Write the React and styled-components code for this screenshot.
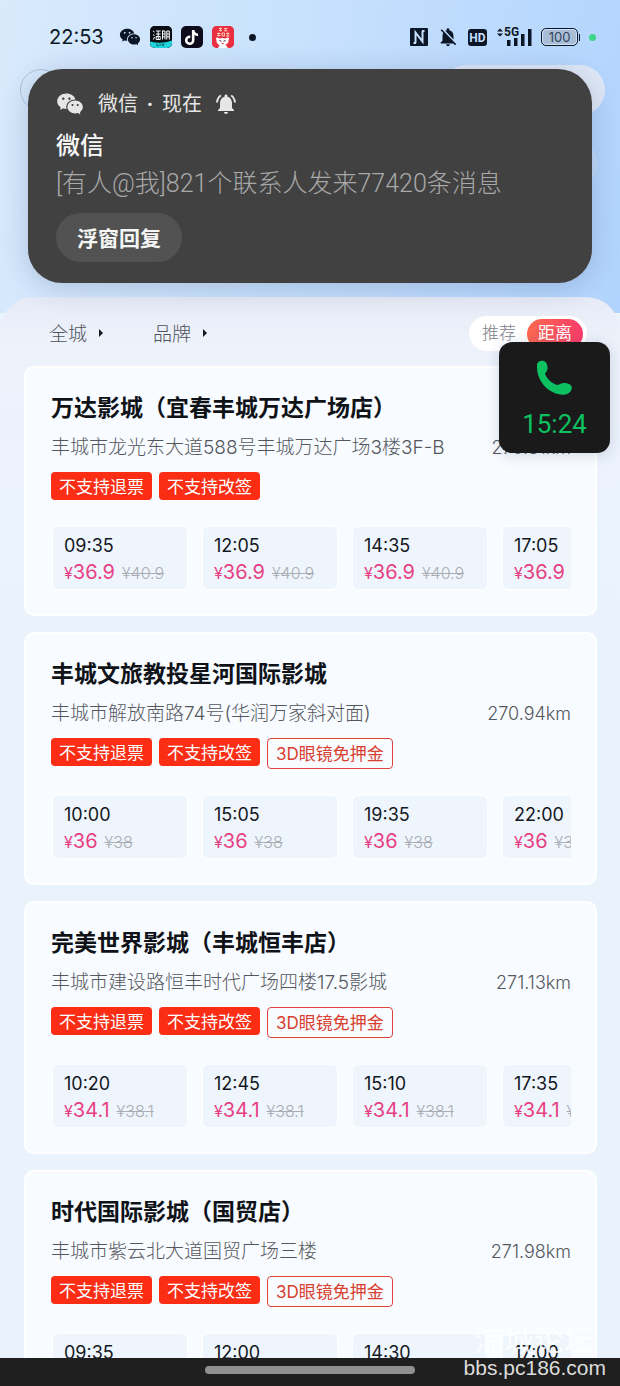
import React from "react";
import styled, { createGlobalStyle } from "styled-components";
import { RiWechatFill } from "react-icons/ri";
import { FaTiktok } from "react-icons/fa6";
import { MdNotificationsActive, MdNotificationsOff } from "react-icons/md";

const GlobalStyle = createGlobalStyle`
  * {
    box-sizing: border-box;
  }
  body {
    margin: 0;
    font-family: Inter, "Noto Sans CJK SC", sans-serif;
    color: #14181f;
  }
  button {
    font: inherit;
    color: inherit;
    border: 0;
    padding: 0;
    background: none;
    cursor: pointer;
  }
  h2, p {
    margin: 0;
  }
`;

const Phone = styled.div`
  position: relative;
  display: flex;
  flex-direction: column;
  height: 100vh;
  overflow: hidden;
  background-color: #ebf3fc;
`;

const Screen = styled.div`
  flex: 1;
  min-height: 0;
  overflow: hidden;
`;

const Header = styled.header`
  height: 313px;
  background-image: linear-gradient(100deg, #d9eafc 0%, #c8e1fd 45%, #b1d4fe 100%);
`;

const StatusBar = styled.div`
  display: flex;
  align-items: center;
  justify-content: space-between;
  height: 65px;
  padding: 9px 24px 0 49px;
  color: #0b1726;
`;

const StatusGroup = styled.div`
  display: flex;
  align-items: center;
  gap: 9px;
`;

const Clock = styled.span`
  margin-right: 6px;
  font-size: 20px;
`;

const AppBadge = styled.span`
  display: flex;
  width: 22px;
  height: 22px;
  align-items: center;
  justify-content: center;
  overflow: hidden;
  border-radius: 5px;
  color: #ffffff;
  background-color: ${(props) => props.$color};
`;

const Dot = styled.span`
  width: 7px;
  height: 7px;
  border-radius: 50%;
  background-color: ${(props) => props.$color};
`;

const MoreDot = styled(Dot)`
  margin-left: 6px;
`;

const Battery = styled.span`
  display: flex;
  align-items: center;
  gap: 1px;
  &::after {
    content: "";
    width: 1px;
    height: 7px;
    background-color: #0b1726;
  }
`;

const BatteryBody = styled.span`
  width: 37px;
  height: 18px;
  border: 1px solid #0b1726;
  border-radius: 5px;
  box-shadow: inset 0 0 0 1px #cfe3fb;
  background-color: #a9bdd6;
  font-size: 13px;
  line-height: 16px;
  text-align: center;
  color: #33465c;
`;

const TopBar = styled.div`
  display: flex;
  align-items: center;
  justify-content: space-between;
  height: 50px;
  padding: 0 15px 0 20px;
`;

const BackButton = styled.button`
  width: 42px;
  height: 42px;
  border: 1px solid #aec3db;
  border-radius: 50%;
`;

const Capsule = styled.div`
  width: 164px;
  height: 50px;
  border-radius: 25px;
  background-color: #dfe8f6;
`;

const SearchRow = styled.div`
  display: flex;
  padding: 24px 23px 0 80px;
`;

const SearchInput = styled.input`
  flex: 1;
  min-width: 0;
  height: 48px;
  border: 1px solid #c9def5;
  border-radius: 24px;
  background-color: #bfdafa;
`;

const Notification = styled.section`
  position: absolute;
  top: 69px;
  left: 28px;
  right: 28px;
  z-index: 2;
  padding: 21px 28px;
  border-radius: 34px;
  background-color: #414141;
  box-shadow: 0 4px 28px rgba(40, 60, 100, 0.22);
  font-family: Roboto, "Noto Sans CJK SC", sans-serif;
`;

const NotificationHead = styled.div`
  display: flex;
  align-items: center;
  height: 28px;
  font-size: 20px;
  line-height: 28px;
  color: #e6e6e6;
`;

const NotificationApp = styled.span`
  display: flex;
  align-items: center;
  margin: 0 12px 0 14px;
`;

const Separator = styled.span`
  width: 24px;
  text-align: center;
  font-weight: 900;
`;

const NotificationTitle = styled.h2`
  margin-top: 10px;
  font-size: 24px;
  font-weight: 500;
  line-height: 36px;
  color: #fafafa;
`;

const NotificationText = styled.p`
  margin-top: 1px;
  font-size: 25px;
  font-weight: 300;
  line-height: 38px;
  color: #a8a8a8;
  white-space: nowrap;
`;

const ReplyButton = styled.button`
  height: 49px;
  margin-top: 10px;
  padding: 0 21px 2px;
  border-radius: 25px;
  background-color: #525252;
  font-size: 21px;
  font-weight: 700;
  color: #f5f5f5;
`;

const Sheet = styled.main`
  position: relative;
  margin-top: -16px;
  padding: 19px 23px 0 24px;
  border-radius: 34px 34px 0 0;
  background-image: linear-gradient(#e6ebf6 0, #edf2fb 50px, #eaf3fc 320px);
`;

const FilterRow = styled.div`
  display: flex;
  align-items: center;
  height: 35px;
  margin-bottom: 15px;
  padding: 0 10px 0 25px;
`;

const FilterButton = styled.button`
  display: flex;
  align-items: center;
  gap: 12px;
  margin-right: 50px;
  padding-bottom: 2px;
  font-size: 19px;
  font-weight: 300;
  color: #4f535a;
  &::after {
    content: "";
    border-left: 4px solid #14181f;
    border-top: 4px solid transparent;
    border-bottom: 4px solid transparent;
  }
`;

const Segmented = styled.div`
  display: flex;
  align-items: center;
  height: 35px;
  margin-left: auto;
  padding: 0 4px 0 2px;
  border-radius: 18px;
  background-color: #ffffff;
`;

const Segment = styled.button`
  width: 56px;
  height: 30px;
  padding-bottom: 2px;
  border-radius: 15px;
  font-size: 17px;
  font-weight: ${(props) => (props.$active ? 400 : 300)};
  line-height: 28px;
  color: ${(props) => (props.$active ? "#ffffff" : "#7d828b")};
  background-image: ${(props) =>
    props.$active ? "linear-gradient(100deg, #fb6a4e, #f83a6c)" : "none"};
`;

const CinemaList = styled.div`
  display: flex;
  flex-direction: column;
  gap: 16px;
`;

const Card = styled.article`
  padding: 24px 24px 23px 25px;
  border: 2px solid #ffffff;
  border-radius: 10px;
  background-color: #f8fbff;
`;

const CinemaName = styled.h2`
  font-size: 23px;
  font-weight: 700;
  line-height: 32px;
  white-space: nowrap;
  color: #0f1318;
`;

const AddressRow = styled.div`
  display: flex;
  justify-content: space-between;
  margin-top: 11px;
  font-size: 19px;
  font-weight: 300;
  line-height: 26px;
  white-space: nowrap;
  color: #54585e;
`;

const Distance = styled.span`
  font-size: 18px;
`;

const Tags = styled.div`
  display: flex;
  align-items: flex-start;
  gap: 7px;
  margin-top: 11px;
`;

const Tag = styled.span`
  height: 28px;
  padding: 1px 8px 0;
  border-radius: 4px;
  background-color: #fb2d14;
  font-size: 17px;
  line-height: 28px;
  color: #ffffff;
`;

const OutlineTag = styled(Tag)`
  height: 31px;
  border: 1px solid #e0443a;
  background-color: transparent;
  color: #d8402f;
`;

const Shows = styled.div`
  display: flex;
  gap: 12px;
  margin-top: 25px;
  overflow: hidden;
`;

const Show = styled.button`
  flex: 0 0 138px;
  height: 66px;
  padding: 6px 0 2px 11px;
  border: 2px solid #fcfdff;
  border-radius: 7px;
  background-color: #eff5fd;
  text-align: left;
  white-space: nowrap;
`;

const ShowTime = styled.div`
  font-size: 18px;
  line-height: 24px;
`;

const PriceLine = styled.div`
  display: flex;
  align-items: baseline;
  line-height: 28px;
`;

const Price = styled.span`
  font-size: 20px;
  color: #e83f83;
`;

const Yen = styled.span`
  font-size: 16px;
`;

const OldPrice = styled.s`
  margin-left: 7px;
  font-size: 16px;
  font-weight: 300;
  color: #a9adb3;
`;

const CallBubble = styled.button`
  position: absolute;
  top: 342px;
  right: 10px;
  z-index: 2;
  display: flex;
  flex-direction: column;
  align-items: center;
  width: 111px;
  height: 111px;
  padding-top: 18px;
  border-radius: 13px;
  background-color: #1a1a1a;
  box-shadow: 0 2px 14px rgba(40, 60, 100, 0.18);
  color: #0cc160;
`;

const CallTime = styled.span`
  margin-top: 12px;
  font-family: Roboto, sans-serif;
  font-size: 26px;
  line-height: 32px;
`;

const NavBar = styled.div`
  display: flex;
  justify-content: center;
  height: 28px;
  padding-top: 8px;
  background-color: #1f1f1f;
`;

const HomeIndicator = styled.div`
  width: 210px;
  height: 8px;
  border-radius: 4px;
  background-color: #909090;
`;

const Watermark = styled.div`
  position: absolute;
  right: 14px;
  bottom: 5px;
  z-index: 3;
  display: flex;
  flex-direction: column;
  align-items: flex-end;
  pointer-events: none;
`;

const WatermarkName = styled.span`
  margin-right: 12px;
  font-size: 30px;
  line-height: 30px;
  color: rgba(255, 255, 255, 0.85);
`;

const WatermarkSite = styled.span`
  font-family: "Liberation Sans", Arial, sans-serif;
  font-size: 21px;
  line-height: 26px;
  color: #dcdcdc;
`;

const REFUND_TAGS = ["不支持退票", "不支持改签"];

const cinemas = [
  {
    name: "万达影城（宜春丰城万达广场店）",
    address: "丰城市龙光东大道588号丰城万达广场3楼3F-B",
    distance: "270.81km",
    times: ["09:35", "12:05", "14:35", "17:05"],
    price: "36.9",
    oldPrice: "40.9",
  },
  {
    name: "丰城文旅教投星河国际影城",
    address: "丰城市解放南路74号(华润万家斜对面)",
    distance: "270.94km",
    perk: "3D眼镜免押金",
    times: ["10:00", "15:05", "19:35", "22:00"],
    price: "36",
    oldPrice: "38",
  },
  {
    name: "完美世界影城（丰城恒丰店）",
    address: "丰城市建设路恒丰时代广场四楼17.5影城",
    distance: "271.13km",
    perk: "3D眼镜免押金",
    times: ["10:20", "12:45", "15:10", "17:35"],
    price: "34.1",
    oldPrice: "38.1",
  },
  {
    name: "时代国际影城（国贸店）",
    address: "丰城市紫云北大道国贸广场三楼",
    distance: "271.98km",
    perk: "3D眼镜免押金",
    times: ["09:35", "12:00", "14:30", "17:00"],
    price: "34.9",
    oldPrice: "38.9",
  },
];

const LiveAppIcon = () => (
  <svg width="22" height="22" viewBox="0 0 22 22">
    <rect width="22" height="22" fill="#0a0d12" />
    <path d="M0 15.5q11 3 22-1V22H0z" fill="#1fd5dc" />
    <path
      d="M3 5l1.500 1M3 8.500l1.500 1M3.500 13.500l1-2.500M6 5h4.500M6 8h4.500M8.200 5v8M6.200 10.500h4v3h-4zM12.500 4.500v9M12.500 5h2.500v8.500M12.500 8h2.500M12.500 10.800h2.500M16.800 5h2.500v8.500M16.800 5v8.500M16.800 8h2.500M16.800 10.800h2.500"
      stroke="#fff"
      strokeWidth="1"
      fill="none"
    />
    <path d="M7 17.500v2.500h1.500M10 17.500v2.500M12 17.500l1 2.500 1-2.500" stroke="#0a5d66" fill="none" />
  </svg>
);

const MascotIcon = () => (
  <svg width="22" height="22" viewBox="0 0 22 22">
    <rect width="22" height="22" fill="#ea2f43" />
    <path
      d="M7 2.500h3M8.500 1.500v4M7 4.500h3M12 2.500h3.500M13.500 2v3M12 4.800h3.500M5 7.500h3.500M6.800 6.500v4M5 9.500h3.500M10 7h2.500v3H10zM14 7.500h3.500M15.800 6.500v4M14 10h3.500"
      stroke="#ffd9b8"
      strokeWidth="0.900"
      fill="none"
    />
    <path d="M4.500 14q-1.500-2.500 1-2.500l2 1q3-1 6 0l2-1q2.500 0 1 2.500.500 3.500-3 4.500l2.500 3.500H6l1.500-3Q4 17.500 4.500 14z" fill="#fff" />
    <path d="M7.500 14.500l2 .8M13.500 14.500l-2 .8" stroke="#40202a" />
    <path d="M9 17h3.500q-1.500 2-3.500 0z" fill="#d5233a" />
  </svg>
);

const NfcIcon = () => (
  <svg width="18" height="18" viewBox="0 0 18 18">
    <rect width="18" height="18" rx="1" fill="#0b1726" />
    <path d="M5.500 15V4.500l7 9V3M3.500 15h2.500M12 3h2.500" stroke="#c5dffd" strokeWidth="2" fill="none" />
  </svg>
);

const HdIcon = () => (
  <svg width="19" height="17" viewBox="0 0 19 17">
    <rect width="19" height="17" rx="3" fill="#0b1726" />
    <text x="9.500" y="13" textAnchor="middle" fontFamily="Roboto, sans-serif" fontSize="12" fontWeight="700" fill="#c5dffd">
      HD
    </text>
  </svg>
);

const SignalIcon = () => (
  <svg width="36" height="24" viewBox="0 0 36 24" fill="#0b1726">
    <path d="M1 6.500L4 3.500l3 3zM1 8.500l3 3 3-3z" />
    <text x="8" y="11" fontFamily="Roboto, sans-serif" fontSize="12" fontWeight="700">
      5G
    </text>
    <path d="M11 15h3.500v6H11zM18 13h3.500v8H18zM25 9h3.500v12H25zM32 4h3.500v17H32z" />
  </svg>
);

const HandsetIcon = () => (
  <svg width="37" height="36" viewBox="0 0 37 36" fill="currentColor">
    <path d="M1 5C1 2 4 .5 7 .7c3 .3 4.500 3.300 4.600 7.300 0 3-2.100 4-2.600 6 2 5 7 9.500 12 11 2.500-.4 4.500-2.600 8-2 4 .4 7 2 6.800 5-.2 3.500-3.800 6.600-8.300 6.800C12 34.500 0 20 1 5z" />
  </svg>
);

const CinemaCard = ({ cinema }) => (
  <Card>
    <CinemaName>{cinema.name}</CinemaName>
    <AddressRow>
      <span>{cinema.address}</span>
      <Distance>{cinema.distance}</Distance>
    </AddressRow>
    <Tags>
      {REFUND_TAGS.map((tag) => (
        <Tag key={tag}>{tag}</Tag>
      ))}
      {cinema.perk && <OutlineTag>{cinema.perk}</OutlineTag>}
    </Tags>
    <Shows>
      {cinema.times.map((time) => (
        <Show key={time}>
          <ShowTime>{time}</ShowTime>
          <PriceLine>
            <Price>
              <Yen>¥</Yen>
              {cinema.price}
            </Price>
            <OldPrice>¥{cinema.oldPrice}</OldPrice>
          </PriceLine>
        </Show>
      ))}
    </Shows>
  </Card>
);

const App = () => (
  <>
    <GlobalStyle />
    <Phone>
      <Screen>
        <Header>
          <StatusBar>
            <StatusGroup>
              <Clock>22:53</Clock>
              <RiWechatFill size={22} />
              <AppBadge $color="#0a0d12">
                <LiveAppIcon />
              </AppBadge>
              <AppBadge $color="#0d0b1c">
                <FaTiktok size={15} />
              </AppBadge>
              <AppBadge $color="#ea2f43">
                <MascotIcon />
              </AppBadge>
              <MoreDot $color="#0b1726" />
            </StatusGroup>
            <StatusGroup>
              <NfcIcon />
              <MdNotificationsOff size={22} />
              <HdIcon />
              <SignalIcon />
              <Battery>
                <BatteryBody>100</BatteryBody>
              </Battery>
              <Dot $color="#3fd68c" />
            </StatusGroup>
          </StatusBar>
          <TopBar>
            <BackButton aria-label="返回" />
            <Capsule />
          </TopBar>
          <SearchRow>
            <SearchInput type="search" aria-label="搜索影院" />
          </SearchRow>
        </Header>

        <Sheet>
          <FilterRow>
            <FilterButton>全城</FilterButton>
            <FilterButton>品牌</FilterButton>
            <Segmented>
              <Segment>推荐</Segment>
              <Segment $active>距离</Segment>
            </Segmented>
          </FilterRow>
          <CinemaList>
            {cinemas.map((cinema) => (
              <CinemaCard cinema={cinema} key={cinema.name} />
            ))}
          </CinemaList>
        </Sheet>
      </Screen>

      <NavBar>
        <HomeIndicator />
      </NavBar>

      <Notification>
        <NotificationHead>
          <RiWechatFill size={28} />
          <NotificationApp>
            微信<Separator>·</Separator>现在
          </NotificationApp>
          <MdNotificationsActive size={24} />
        </NotificationHead>
        <NotificationTitle>微信</NotificationTitle>
        <NotificationText>[有人@我]821个联系人发来77420条消息</NotificationText>
        <ReplyButton>浮窗回复</ReplyButton>
      </Notification>

      <CallBubble aria-label="通话中 15:24">
        <HandsetIcon />
        <CallTime>15:24</CallTime>
      </CallBubble>

      <Watermark>
        <WatermarkName>浦城论坛</WatermarkName>
        <WatermarkSite>bbs.pc186.com</WatermarkSite>
      </Watermark>
    </Phone>
  </>
);

export default App;
